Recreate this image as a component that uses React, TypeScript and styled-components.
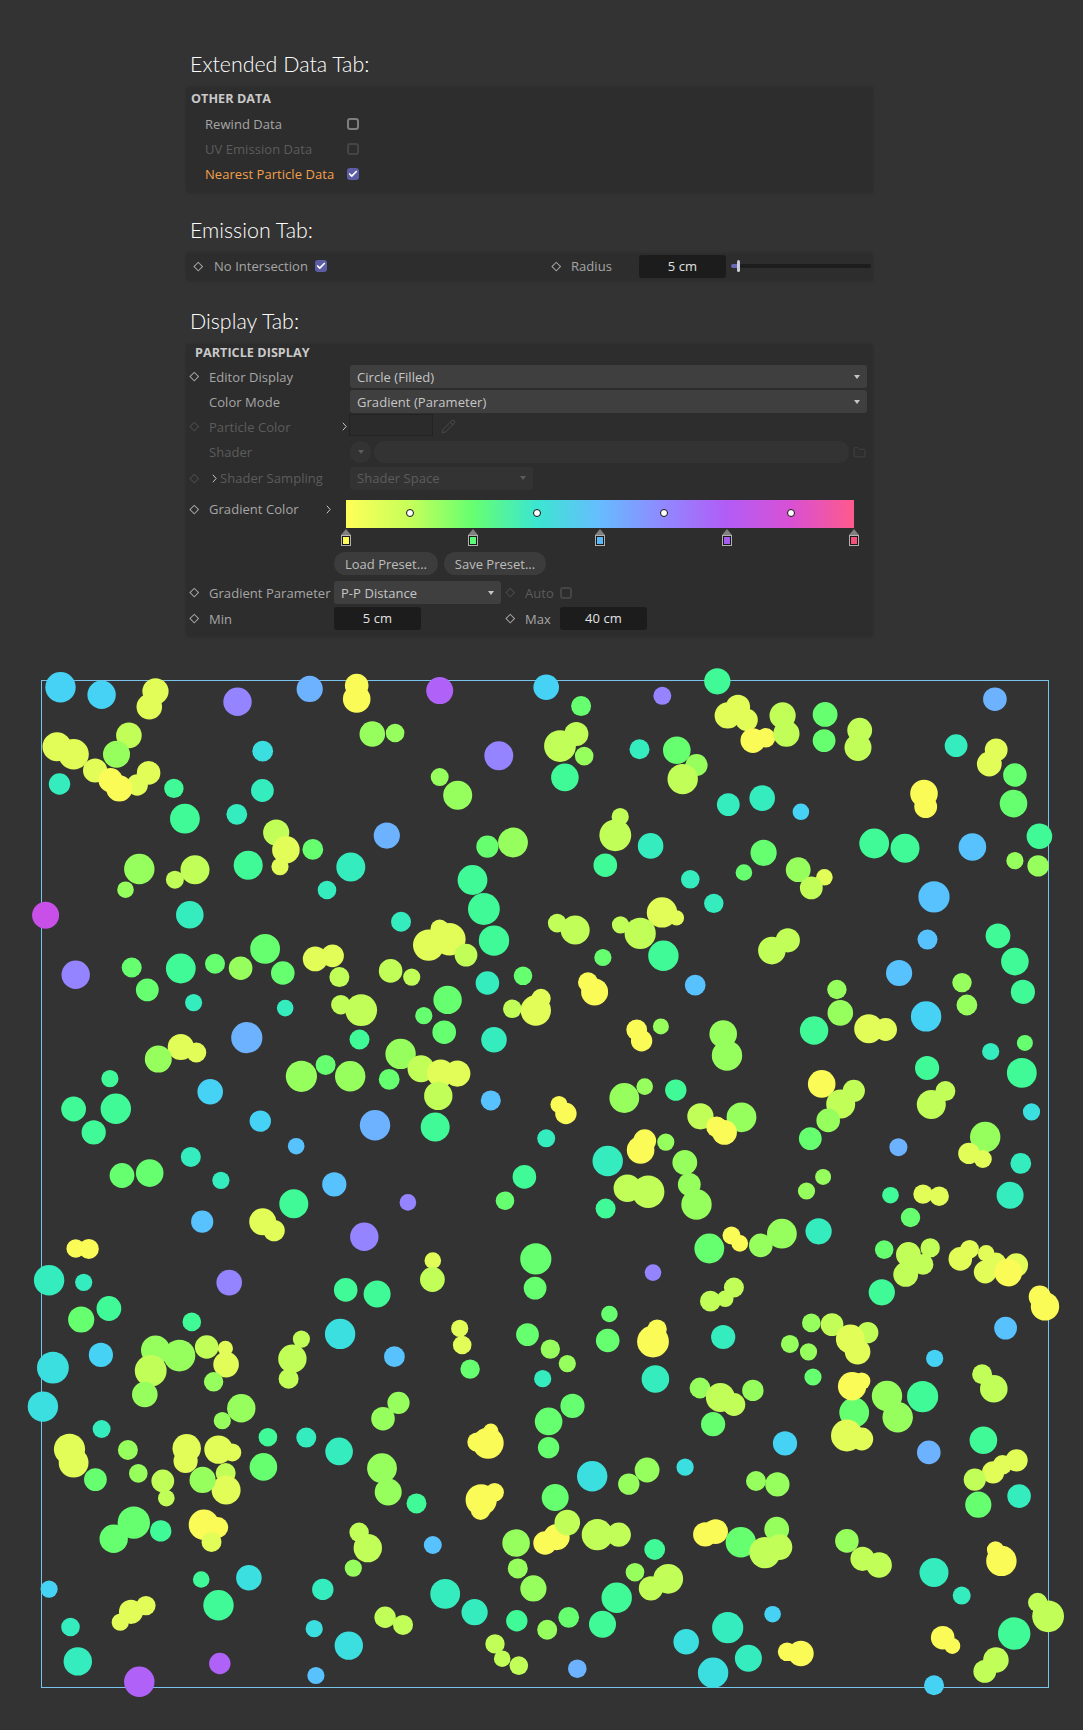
import React from "react";
import styled, { createGlobalStyle } from "styled-components";
import { Check, Folder, Pencil } from "lucide-react";

const GlobalStyle = createGlobalStyle`
  html, body {
    margin: 0;
    padding: 0;
    background: #333333;
  }
  body {
    font-family: "Open Sans", "Liberation Sans", sans-serif;
    font-size: 13px;
    letter-spacing: 0.05px;
  }
`;

const Page = styled.div`
  width: 1083px;
  height: 1730px;
  overflow: hidden;
  padding-top: 51px;
  box-sizing: border-box;
`;

const Column = styled.div`
  margin-left: 186px;
  width: 687px;
`;

const Heading = styled.h2<{ $top?: number }>`
  margin: ${(p) => p.$top ?? 0}px 0 8px 4px;
  height: 28px;
  line-height: 26px;
  font-family: "Lato", "Open Sans", sans-serif;
  font-weight: 300;
  font-size: 21.4px;
  letter-spacing: 0;
  color: #ffffff;
`;

const Panel = styled.section`
  background: #2d2d2d;
  border-radius: 4px;
  box-shadow: 0 0 3px rgba(40, 40, 40, 0.6);
`;

const GroupTitle = styled.div<{ $indent: number }>`
  height: 20px;
  line-height: 20px;
  padding-left: ${(p) => p.$indent}px;
  font-weight: 700;
  font-size: 12.6px;
  color: #c9c9c9;
`;

/* shared text colours: normal, disabled, overridden */
const labelColor = { normal: "#a6a6a6", dim: "#5c5c5c", active: "#f2a04a" };

const Label = styled.span<{ $tone?: keyof typeof labelColor; $w?: number; $left?: number }>`
  color: ${(p) => labelColor[p.$tone ?? "normal"]};
  white-space: nowrap;
  margin-left: ${(p) => p.$left ?? 0}px;
  ${(p) => (p.$w ? `width: ${p.$w}px; flex: none;` : "")}
`;

const Box = styled.span<{ $checked?: boolean; $dim?: boolean }>`
  display: inline-flex;
  align-items: center;
  justify-content: center;
  flex: none;
  width: 12px;
  height: 12px;
  box-sizing: border-box;
  border-radius: 3px;
  border: ${(p) =>
    p.$checked ? "none" : `2px solid ${p.$dim ? "#454545" : "#7e7e7e"}`};
  background: ${(p) => (p.$checked ? "#5d5da6" : "transparent")};
  color: #ffffff;
`;

const CheckBox = ({ checked, dim }: { checked?: boolean; dim?: boolean }) => (
  <Box $checked={checked} $dim={dim}>
    {checked && <Check size={10} strokeWidth={4} />}
  </Box>
);

const Diamond = styled.i<{ $dim?: boolean }>`
  display: block;
  flex: none;
  width: 6.5px;
  height: 6.5px;
  box-sizing: border-box;
  transform: rotate(45deg);
  border: 1.2px solid ${(p) => (p.$dim ? "#4c4c4c" : "#a8a8a8")};
`;

const DiamondSlot = styled.span`
  display: flex;
  flex: none;
  width: 23px;
  padding-left: 5px;
  box-sizing: border-box;
`;

const Chevron = styled.svg.attrs({ viewBox: "0 0 6 10" })<{ $right?: number }>`
  flex: none;
  width: 5px;
  height: 9px;
  fill: none;
  stroke: #c4c4c4;
  stroke-width: 1.2;
  margin-left: ${(p) => (p.$right === undefined ? "3px" : "auto")};
  margin-right: ${(p) => p.$right ?? 3}px;
`;

const ChevronPath = () => <path d="M1 0.5 L5 5 L1 9.5" />;

/* ---------- extended data ---------- */

const CheckRow = styled.div`
  display: flex;
  align-items: center;
  height: 25px;
  padding-left: 19px;
`;

const OtherData = styled(Panel)`
  height: 106px;
  padding-top: 2px;
  box-sizing: border-box;
  ${GroupTitle} {
    margin-bottom: 2px;
  }
`;

/* ---------- emission ---------- */

const EmissionBar = styled(Panel)`
  display: grid;
  grid-template-columns: 366px 1fr;
  height: 28px;
  padding-bottom: 2px;
  box-sizing: border-box;
  align-items: center;
`;

const EmissionGroup = styled.div<{ $indent: number }>`
  display: flex;
  align-items: center;
  padding-left: ${(p) => p.$indent}px;
`;

const ValueField = styled.div`
  flex: none;
  width: 87px;
  height: 23px;
  line-height: 23px;
  text-align: center;
  background: #1c1c1c;
  border-radius: 3px;
  color: #e2e2e2;
`;

const SliderTrack = styled.div`
  position: relative;
  width: 140px;
  height: 4px;
  margin-left: 5px;
  background: #1d1d1d;
  border-radius: 2px;
`;

const SliderFill = styled.div`
  position: absolute;
  left: 0;
  top: 0;
  width: 7px;
  height: 4px;
  background: #6a6ab8;
  border-radius: 2px 0 0 2px;
`;

const SliderThumb = styled.div`
  position: absolute;
  left: 6px;
  top: -4px;
  width: 3px;
  height: 12px;
  border-radius: 2px;
  background: #c9c9d8;
`;

/* ---------- display ---------- */

const DisplayPanel = styled(Panel)`
  height: 293px;
  box-sizing: border-box;
  ${GroupTitle} {
    height: 18px;
    line-height: 18px;
    margin-bottom: 2px;
  }
`;

const Row = styled.div<{ $h?: number }>`
  display: flex;
  align-items: center;
  height: ${(p) => p.$h ?? 25}px;
`;

const LabelCell = styled.div<{ $w: number }>`
  display: flex;
  align-items: center;
  flex: none;
  width: ${(p) => p.$w}px;
`;

const Select = styled.div<{ $w: number; $dim?: boolean }>`
  display: flex;
  align-items: center;
  justify-content: space-between;
  flex: none;
  width: ${(p) => p.$w}px;
  height: 23px;
  padding: 0 7px;
  box-sizing: border-box;
  border-radius: 3px;
  background: ${(p) => (p.$dim ? "#333333" : "#3f3f3f")};
  color: ${(p) => (p.$dim ? "#5c5c5c" : "#c6c6c6")};
`;

const Caret = styled.i<{ $dim?: boolean }>`
  display: block;
  flex: none;
  width: 0;
  height: 0;
  border-left: 3px solid transparent;
  border-right: 3px solid transparent;
  border-top: 4px solid ${(p) => (p.$dim ? "#5c5c5c" : "#c6c6c6")};
`;

const Swatch = styled.div`
  flex: none;
  width: 84px;
  height: 22px;
  margin: -3px 0 0 -1px;
  box-sizing: border-box;
  border: 1px solid #232323;
  background: #2b2b2b;
`;

const DimIcon = styled.span<{ $left: number }>`
  display: flex;
  margin-left: ${(p) => p.$left}px;
  color: #4d4d4d;
`;

const ShaderDrop = styled.div`
  display: flex;
  align-items: center;
  justify-content: center;
  flex: none;
  width: 21px;
  height: 22px;
  border-radius: 10px;
  background: #333333;
`;

const ShaderField = styled.div`
  flex: none;
  width: 475px;
  height: 22px;
  margin-left: 3px;
  border-radius: 10px;
  background: #333333;
`;

const GradientRow = styled.div`
  display: flex;
  align-items: flex-start;
  height: 46px;
  margin-top: 9px;
  ${LabelCell} {
    height: 18px;
  }
`;

const GradientEditor = styled.div`
  position: relative;
  flex: none;
  width: 508px;
  height: 46px;
`;

const GradientBar = styled.div`
  height: 28px;
  background: linear-gradient(
    90deg,
    #ffff58 0%,
    #c6ff5a 12.5%,
    #66ff70 25%,
    #3ce6d0 37.5%,
    #66bcff 50%,
    #9088ff 62.5%,
    #b25cf5 75%,
    #d850d4 87.5%,
    #ff5a8c 100%
  );
`;

const Knob = styled.i<{ $at: number }>`
  position: absolute;
  left: ${(p) => p.$at}%;
  top: 9px;
  width: 8px;
  height: 8px;
  margin-left: -4px;
  box-sizing: border-box;
  border-radius: 50%;
  background: #ffffff;
  border: 1.5px solid #111111;
`;

const Stop = styled.i<{ $at: number; $color: string }>`
  position: absolute;
  left: ${(p) => p.$at}%;
  top: 35px;
  width: 10px;
  height: 11px;
  margin-left: -5px;
  box-sizing: border-box;
  border: 1px solid #b0b0b0;
  outline: 1px solid #1a1a1a;
  outline-offset: -2px;
  background: ${(p) => p.$color};
  &::before {
    content: "";
    position: absolute;
    left: -1px;
    top: -7px;
    border-left: 5px solid transparent;
    border-right: 5px solid transparent;
    border-bottom: 6px solid #808080;
  }
`;

const PresetRow = styled.div`
  display: flex;
  gap: 6px;
  margin: 6px 0 6px 148px;
`;

const PresetButton = styled.button<{ $w: number }>`
  width: ${(p) => p.$w}px;
  height: 23px;
  padding: 0;
  border: 0;
  border-radius: 12px;
  background: #3c3c3c;
  color: #bdbdbd;
  font: inherit;
`;

const ParamGrid = styled.div`
  display: grid;
  grid-template-columns: 148px 167px 24px 35px 87px;
  grid-auto-rows: 23px;
  row-gap: 3px;
  align-items: center;
`;

const GridDiamond = styled.span`
  display: flex;
  padding-left: 6px;
`;

/* ---------- particle plot ---------- */

const Frame = styled.div`
  width: 1008px;
  height: 1008px;
  margin: 43px 0 0 41px;
  box-sizing: border-box;
  border: 1px solid #78c4ec;
`;

const Plot = styled.svg`
  display: block;
  width: 1006px;
  height: 1006px;
  overflow: visible;
`;

// colour of a particle, going along the gradient from close to far
const palette: Record<string, string> = {
  y: "#fbfb58",
  l: "#e2fc58",
  k: "#c2fe58",
  g: "#96ff5e",
  n: "#66ff70",
  m: "#40fa98",
  t: "#34ecbe",
  c: "#3cdfe0",
  s: "#46d2f4",
  b: "#58c2ff",
  a: "#6cb2ff",
  p: "#9484ff",
  v: "#b062f8",
  h: "#c850e8",
};

type Dot = [number, number, number, string];

// traced per quadrant from a 2.9x view, hence the big numbers
const topLeft: Dot[] = [
  [175,108,44,"s"],[294,130,41,"s"],[450,120,38,"l"],[432,165,37,"l"],[687,150,41,"p"],[896,113,38,"a"],[1032,103,34,"y"],[1032,142,40,"y"],[1272,118,39,"v"],
  [1077,244,37,"g"],[1143,241,27,"g"],[760,294,30,"c"],[1443,307,42,"p"],[373,248,37,"k"],[337,303,39,"g"],[165,281,42,"l"],[213,303,44,"l"],[275,350,35,"l"],
  [430,357,34,"l"],[397,392,31,"l"],[320,378,35,"y"],[345,402,38,"y"],[172,389,31,"t"],[503,402,28,"m"],[759,408,33,"t"],[1272,369,26,"g"],[1324,422,42,"g"],
  [535,490,43,"m"],[685,477,30,"t"],[799,530,38,"k"],[827,580,40,"l"],[810,629,25,"l"],[905,579,30,"n"],[1119,539,38,"a"],[403,636,44,"g"],[564,638,42,"k"],
  [506,667,26,"k"],[363,696,24,"g"],[718,625,42,"m"],[1015,630,42,"t"],[946,697,27,"t"],[1410,571,32,"n"],[1484,559,43,"g"],[1367,668,43,"m"],[1400,752,46,"m"],
  [132,770,39,"h"],[549,769,40,"t"],[1160,789,29,"t"],[1240,857,45,"l"],[1272,810,27,"l"],[1300,840,47,"l"],[1348,886,33,"k"],[1429,844,44,"m"],[767,868,43,"n"],
  [219,943,41,"p"],[381,922,29,"n"],[523,925,43,"m"],[622,911,29,"n"],[696,924,34,"g"],[818,938,34,"n"],[912,897,36,"l"],[962,888,33,"l"],[982,950,29,"k"],
  [426,987,33,"n"],[560,1024,25,"t"],[825,1040,24,"t"],[986,1030,28,"k"],[1045,1046,46,"k"],[1130,932,34,"k"],[1191,950,25,"k"],[1295,1016,41,"n"],[1226,1062,25,"n"],
  [1285,1110,34,"n"],[1410,967,34,"t"],[1513,946,27,"n"],[1482,1042,27,"k"],[1565,1012,28,"l"],[1550,1047,44,"l"],[1429,1132,37,"t"],[1040,1131,29,"m"],[714,1126,45,"a"],
  [523,1153,38,"l"],[568,1169,29,"l"],[458,1188,39,"g"],[1159,1173,44,"g"],[1218,1216,39,"k"],[1275,1229,40,"l"],[1323,1230,38,"l"],[1268,1295,41,"k"],[942,1205,29,"n"],
  [872,1238,45,"g"],[1013,1238,44,"g"],[1126,1247,30,"n"],[318,1245,25,"m"],[608,1283,37,"s"],[213,1333,36,"m"],[335,1332,44,"m"],[271,1401,35,"m"],[753,1368,31,"s"],
  [1085,1380,44,"a"],[1420,1308,29,"b"],[1259,1385,42,"m"],[857,1441,24,"b"],[552,1472,29,"t"],[353,1526,36,"n"],[433,1519,40,"n"],[639,1540,25,"t"],[967,1552,35,"b"],[1517,1530,34,"m"],
];

const topRight: Dot[] = [
  [15,108,37,"s"],[116,163,29,"n"],[351,133,26,"p"],[510,91,38,"m"],[1313,143,34,"a"],[570,165,35,"l"],[540,190,38,"l"],[595,203,32,"l"],[613,263,36,"y"],[650,255,28,"y"],
  [699,190,38,"k"],[710,243,38,"k"],[822,187,36,"n"],[819,263,33,"n"],[922,233,36,"k"],[917,283,39,"k"],[102,244,35,"k"],[55,279,46,"k"],[125,308,27,"g"],[69,370,40,"m"],
  [285,288,29,"t"],[393,291,40,"n"],[450,334,32,"g"],[410,375,44,"k"],[1201,278,33,"t"],[1317,290,33,"l"],[1297,331,36,"l"],[1371,363,34,"n"],[1367,446,40,"n"],[1108,417,40,"y"],
  [1113,455,33,"y"],[640,430,37,"t"],[542,449,33,"t"],[752,470,24,"s"],[229,484,25,"k"],[215,538,46,"k"],[317,569,37,"t"],[186,625,34,"m"],[964,562,43,"m"],[1053,576,42,"m"],
  [1248,572,40,"b"],[1442,541,37,"m"],[1371,612,25,"g"],[1438,627,31,"g"],[644,589,38,"n"],[587,646,24,"n"],[744,638,36,"g"],[820,660,24,"l"],[782,691,33,"k"],[1137,717,45,"b"],
  [432,666,27,"t"],[500,736,28,"t"],[350,762,44,"l"],[392,778,22,"l"],[47,793,27,"k"],[99,813,42,"k"],[230,798,25,"k"],[287,823,45,"k"],[354,888,44,"m"],[179,893,25,"n"],
  [714,843,35,"k"],[668,873,40,"k"],[1118,841,29,"b"],[1322,830,36,"m"],[1371,905,40,"m"],[1394,993,35,"m"],[1036,938,38,"b"],[136,965,29,"y"],[155,993,39,"y"],[446,973,30,"b"],
  [1218,966,28,"g"],[1232,1031,30,"g"],[856,986,28,"g"],[866,1054,37,"g"],[790,1105,41,"m"],[948,1100,42,"l"],[997,1102,33,"l"],[1114,1064,44,"s"],[277,1103,30,"y"],[291,1135,31,"y"],
  [347,1093,23,"g"],[527,1115,40,"g"],[538,1178,44,"g"],[1400,1141,23,"n"],[1301,1166,25,"t"],[1117,1214,35,"m"],[1391,1228,43,"m"],[812,1260,40,"y"],[905,1280,32,"k"],[867,1318,42,"k"],
  [831,1366,34,"g"],[779,1419,33,"n"],[1170,1281,29,"k"],[1129,1320,42,"k"],[1419,1341,25,"c"],[300,1268,24,"g"],[241,1301,43,"g"],[390,1278,31,"m"],[52,1320,25,"y"],[72,1346,31,"y"],
  [15,1418,26,"t"],[461,1354,38,"k"],[580,1357,43,"g"],[508,1385,30,"y"],[531,1401,36,"y"],[1285,1414,44,"g"],[1238,1462,31,"l"],[1278,1478,26,"l"],[1388,1491,30,"t"],[1034,1444,26,"a"],
  [300,1425,33,"y"],[288,1452,40,"y"],[361,1429,25,"g"],[193,1484,44,"t"],[416,1488,36,"g"],[429,1552,33,"g"],[816,1530,23,"g"],
];

const bottomLeft: Dot[] = [
  [585,92,32,"b"],[760,92,39,"l"],[793,118,31,"l"],[850,40,42,"m"],[1180,36,24,"p"],[1054,136,41,"p"],[1461,31,27,"n"],[219,170,27,"y"],[257,171,29,"y"],[142,262,44,"t"],
  [242,268,25,"t"],[663,269,37,"p"],[1252,205,24,"l"],[1251,260,36,"k"],[1000,290,34,"m"],[1091,302,39,"m"],[1550,200,45,"n"],[1548,285,33,"n"],[235,376,38,"n"],[315,344,36,"m"],
  [555,383,27,"m"],[292,479,35,"s"],[153,516,46,"c"],[1141,484,30,"b"],[984,418,44,"c"],[872,433,25,"k"],[846,490,41,"k"],[835,548,29,"k"],[450,465,42,"g"],[436,525,46,"k"],
  [519,481,46,"g"],[419,594,37,"g"],[598,456,34,"k"],[652,460,22,"l"],[654,507,37,"l"],[618,557,28,"g"],[1330,402,25,"l"],[1337,450,27,"l"],[1360,520,28,"n"],[1526,420,33,"n"],
  [124,629,44,"c"],[698,634,41,"g"],[643,670,25,"g"],[775,718,27,"m"],[886,719,29,"t"],[1153,618,32,"g"],[1108,664,34,"g"],[1420,700,22,"y"],[1380,732,28,"y"],[1412,735,45,"y"],
  [294,694,26,"t"],[201,753,45,"l"],[213,792,43,"l"],[276,841,33,"n"],[370,755,29,"g"],[400,823,27,"g"],[540,750,41,"l"],[537,787,35,"l"],[672,762,26,"l"],[632,754,41,"l"],
  [653,822,29,"k"],[654,871,42,"l"],[586,842,38,"g"],[471,845,33,"k"],[481,895,24,"k"],[762,804,40,"n"],[981,759,40,"t"],[1105,808,43,"g"],[1123,877,39,"g"],[1205,910,29,"m"],
  [1392,900,45,"y"],[1431,878,27,"y"],[1390,930,28,"y"],[329,1013,41,"n"],[387,966,47,"n"],[465,990,31,"m"],[630,980,30,"y"],[590,972,44,"y"],[612,1022,29,"l"],[1039,994,28,"k"],
  [1064,1040,41,"k"],[1022,1098,25,"g"],[1252,1031,26,"b"],[1493,1025,40,"g"],[1498,1099,29,"g"],[1543,1157,38,"g"],[582,1131,24,"m"],[720,1126,37,"c"],[632,1206,44,"m"],[142,1159,25,"s"],
  [934,1160,31,"t"],[1288,1173,43,"t"],[1373,1226,38,"t"],[1495,1251,31,"m"],[204,1269,27,"t"],[225,1369,41,"t"],[403,1428,44,"v"],[636,1375,31,"v"],[914,1410,25,"b"],[1009,1323,41,"c"],
  [909,1274,25,"c"],[1114,1241,31,"k"],[1166,1263,29,"k"],[1432,1318,28,"k"],[1453,1361,24,"k"],[1501,1381,27,"k"],[348,1255,25,"l"],[379,1225,35,"l"],[422,1207,28,"l"],
];

const bottomRight: Dot[] = [
  [187,54,29,"m"],[250,-5,40,"k"],[310,5,47,"k"],[450,42,44,"g"],[768,3,25,"g"],[1011,15,24,"m"],[1105,12,28,"l"],[1152,18,28,"l"],[1357,15,39,"t"],[1069,80,28,"n"],
  [551,132,26,"y"],[575,155,24,"y"],[487,170,43,"n"],[636,161,34,"g"],[697,127,43,"g"],[803,120,38,"t"],[993,173,27,"n"],[1063,187,36,"k"],[1126,168,28,"k"],[1105,216,30,"k"],
  [1055,245,36,"k"],[986,297,38,"m"],[1213,200,34,"l"],[1240,172,27,"l"],[1288,184,24,"l"],[1316,212,30,"l"],[1285,238,33,"l"],[1375,218,34,"l"],[1352,240,40,"y"],[1443,310,32,"y"],
  [1458,338,41,"y"],[324,240,24,"p"],[558,283,29,"k"],[533,316,24,"k"],[490,323,30,"k"],[198,360,24,"n"],[193,437,34,"n"],[336,404,28,"y"],[324,440,46,"y"],[527,427,35,"t"],
  [1344,401,33,"b"],[782,386,27,"g"],[842,391,33,"k"],[945,414,31,"k"],[895,433,42,"l"],[916,470,37,"l"],[720,447,26,"g"],[774,470,25,"g"],[787,543,25,"n"],[1139,489,25,"s"],
  [1276,535,29,"k"],[1310,577,40,"k"],[27,462,28,"g"],[76,504,25,"g"],[5,548,25,"t"],[331,549,40,"t"],[460,575,30,"g"],[613,582,31,"g"],[519,603,42,"k"],[558,623,33,"k"],
  [498,680,35,"n"],[91,627,35,"n"],[22,672,40,"n"],[22,748,31,"n"],[906,646,43,"n"],[900,570,41,"y"],[928,555,25,"y"],[885,713,46,"l"],[928,723,33,"l"],[1032,660,44,"g"],
  [1001,598,44,"g"],[1104,600,45,"m"],[706,736,35,"s"],[1122,762,34,"a"],[1280,727,40,"m"],[1376,785,32,"l"],[1335,798,28,"l"],[1308,820,32,"l"],[1255,841,32,"k"],[1265,914,38,"n"],
  [1383,889,34,"t"],[148,831,44,"c"],[307,813,36,"g"],[254,854,31,"g"],[417,805,25,"c"],[622,845,29,"g"],[684,855,35,"g"],[41,893,39,"n"],[12,1025,34,"y"],[45,1008,38,"y"],[76,966,37,"k"],
  [163,1001,45,"k"],[225,1001,35,"k"],[329,1044,30,"m"],[272,1110,27,"g"],[368,1129,43,"k"],[318,1157,35,"k"],[219,1184,44,"m"],[80,1241,30,"n"],[178,1261,39,"m"],[18,1277,29,"g"],
  [475,1000,35,"y"],[505,992,36,"y"],[578,1023,44,"n"],[682,985,36,"g"],[690,1037,37,"k"],[648,1053,45,"k"],[885,1019,34,"g"],[930,1071,35,"k"],[978,1089,37,"k"],[1137,1111,42,"t"],
  [1315,1045,25,"y"],[1332,1077,44,"y"],[1217,1178,26,"t"],[1437,1198,28,"k"],[1467,1238,46,"k"],[1369,1288,47,"m"],[1162,1300,34,"y"],[1190,1324,23,"y"],[1137,1438,29,"s"],[1316,1365,37,"k"],
  [1284,1398,33,"k"],[540,1271,45,"t"],[600,1360,39,"t"],[420,1312,37,"c"],[498,1402,44,"c"],[670,1232,24,"s"],[712,1341,27,"y"],[752,1346,37,"y"],[105,1390,27,"a"],
];

const FRAME_X = 42;
const FRAME_Y = 681;
const SX = 2.893;
const SY = 2.904;

const quadrants: [Dot[], number, number][] = [
  [topLeft, 0, 650],
  [topRight, 541, 650],
  [bottomLeft, 0, 1190],
  [bottomRight, 541, 1190],
];

const particles = quadrants.flatMap(([dots, ox, oy]) =>
  dots.map(([x, y, r, c]) => ({
    x: +(x / SX + ox - FRAME_X).toFixed(1),
    y: +(y / SY + oy - FRAME_Y).toFixed(1),
    r: +(r / SX).toFixed(1),
    fill: palette[c],
  }))
);

const stops = [
  { at: 0, color: "#ffff58" },
  { at: 25, color: "#5cfa78" },
  { at: 50, color: "#58b8f8" },
  { at: 75, color: "#a45cee" },
  { at: 100, color: "#f4507c" },
];

export default function App() {
  return (
    <Page>
      <GlobalStyle />
      <Column>
        <Heading>Extended Data Tab:</Heading>
        <OtherData>
          <GroupTitle $indent={5}>OTHER DATA</GroupTitle>
          <CheckRow>
            <Label $w={142}>Rewind Data</Label>
            <CheckBox />
          </CheckRow>
          <CheckRow>
            <Label $w={142} $tone="dim">UV Emission Data</Label>
            <CheckBox dim />
          </CheckRow>
          <CheckRow>
            <Label $w={142} $tone="active">Nearest Particle Data</Label>
            <CheckBox checked />
          </CheckRow>
        </OtherData>

        <Heading $top={24}>Emission Tab:</Heading>
        <EmissionBar>
          <EmissionGroup $indent={9}>
            <Diamond />
            <Label $w={101} $left={12.5}>No Intersection</Label>
            <CheckBox checked />
          </EmissionGroup>
          <EmissionGroup $indent={1}>
            <Diamond />
            <Label $w={68} $left={11.5}>Radius</Label>
            <ValueField>5 cm</ValueField>
            <SliderTrack>
              <SliderFill />
              <SliderThumb />
            </SliderTrack>
          </EmissionGroup>
        </EmissionBar>

        <Heading $top={27}>Display Tab:</Heading>
        <DisplayPanel>
          <GroupTitle $indent={9}>PARTICLE DISPLAY</GroupTitle>
          <Row>
            <LabelCell $w={164}>
              <DiamondSlot><Diamond /></DiamondSlot>
              <Label>Editor Display</Label>
            </LabelCell>
            <Select $w={517}>Circle (Filled)<Caret /></Select>
          </Row>
          <Row>
            <LabelCell $w={164}>
              <DiamondSlot />
              <Label>Color Mode</Label>
            </LabelCell>
            <Select $w={517}>Gradient (Parameter)<Caret /></Select>
          </Row>
          <Row>
            <LabelCell $w={164}>
              <DiamondSlot><Diamond $dim /></DiamondSlot>
              <Label $tone="dim">Particle Color</Label>
              <Chevron $right={3}><ChevronPath /></Chevron>
            </LabelCell>
            <Swatch />
            <DimIcon $left={8}><Pencil size={15} strokeWidth={1.5} /></DimIcon>
          </Row>
          <Row $h={26}>
            <LabelCell $w={164}>
              <DiamondSlot />
              <Label $tone="dim">Shader</Label>
            </LabelCell>
            <ShaderDrop><Caret $dim /></ShaderDrop>
            <ShaderField />
            <DimIcon $left={4}><Folder size={13} strokeWidth={1.2} /></DimIcon>
          </Row>
          <Row $h={26}>
            <LabelCell $w={164}>
              <DiamondSlot><Diamond $dim /></DiamondSlot>
              <Chevron><ChevronPath /></Chevron>
              <Label $tone="dim">Shader Sampling</Label>
            </LabelCell>
            <Select $w={183} $dim>Shader Space<Caret $dim /></Select>
          </Row>

          <GradientRow>
            <LabelCell $w={160}>
              <DiamondSlot><Diamond /></DiamondSlot>
              <Label>Gradient Color</Label>
              <Chevron $right={15}><ChevronPath /></Chevron>
            </LabelCell>
            <GradientEditor>
              <GradientBar />
              {[12.6, 37.6, 62.5, 87.5].map((at) => (
                <Knob key={at} $at={at} />
              ))}
              {stops.map((s) => (
                <Stop key={s.at} $at={s.at} $color={s.color} />
              ))}
            </GradientEditor>
          </GradientRow>

          <PresetRow>
            <PresetButton $w={104}>Load Preset...</PresetButton>
            <PresetButton $w={102}>Save Preset...</PresetButton>
          </PresetRow>

          <ParamGrid>
            <LabelCell $w={148}>
              <DiamondSlot><Diamond /></DiamondSlot>
              <Label>Gradient Parameter</Label>
            </LabelCell>
            <Select $w={167}>P-P Distance<Caret /></Select>
            <GridDiamond><Diamond $dim /></GridDiamond>
            <Label $tone="dim">Auto</Label>
            <CheckBox dim />

            <LabelCell $w={148}>
              <DiamondSlot><Diamond /></DiamondSlot>
              <Label>Min</Label>
            </LabelCell>
            <ValueField>5 cm</ValueField>
            <GridDiamond><Diamond /></GridDiamond>
            <Label>Max</Label>
            <ValueField>40 cm</ValueField>
          </ParamGrid>
        </DisplayPanel>
      </Column>

      <Frame>
        <Plot viewBox="0 0 1006 1006">
          {particles.map((d, i) => (
            <circle key={i} cx={d.x} cy={d.y} r={d.r} fill={d.fill} />
          ))}
        </Plot>
      </Frame>
    </Page>
  );
}
